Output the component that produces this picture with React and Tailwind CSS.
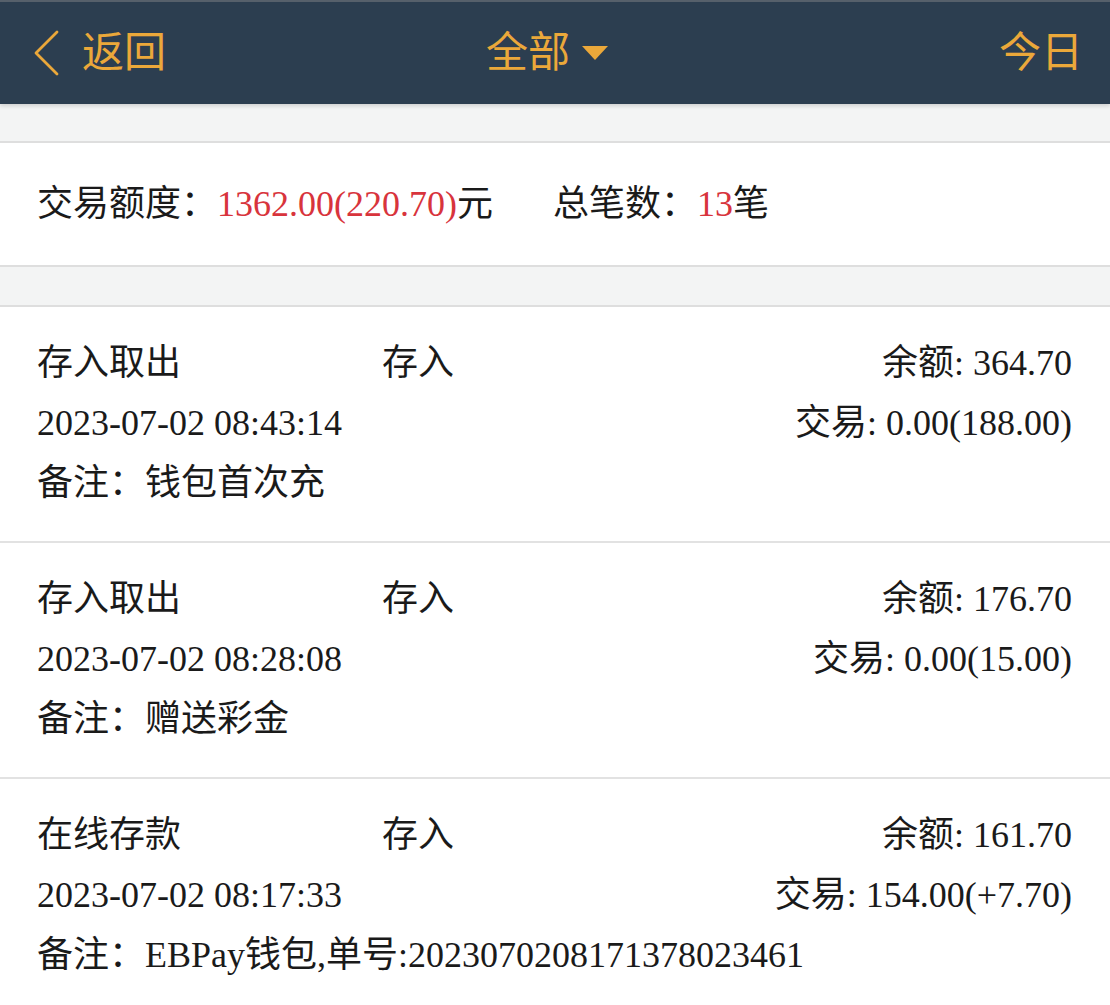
const records = [
  { kind: '存入取出', dir: '存入', balance: '364.70', time: '2023-07-02 08:43:14', amount: '0.00(188.00)', note: '钱包首次充' },
  { kind: '存入取出', dir: '存入', balance: '176.70', time: '2023-07-02 08:28:08', amount: '0.00(15.00)', note: '赠送彩金' },
  { kind: '在线存款', dir: '存入', balance: '161.70', time: '2023-07-02 08:17:33', amount: '154.00(+7.70)', note: 'EBPay钱包,单号:2023070208171378023461' },
];

function Header() {
  return (
    <div className="relative h-[104px] bg-[#2c3e50] flex items-center justify-between pl-[30px] pr-[27px] text-[42px] text-[#eba83a] shadow-[0_2px_4px_rgba(0,0,0,0.15)] border-t-2 border-[#56606b]">
      <div className="flex items-center">
        <svg width="32" height="48" viewBox="0 0 32 48" fill="none" stroke="currentColor" strokeWidth="2.8" strokeLinecap="round" strokeLinejoin="round">
          <path d="M27 3 L6 24 L27 45" />
        </svg>
        <span className="ml-[20px] leading-none">返回</span>
      </div>
      <div className="absolute left-[486px] top-0 h-full flex items-center">
        <span className="leading-none">全部</span>
        <svg className="ml-[12px]" width="26" height="16" viewBox="0 0 26 16" fill="currentColor">
          <path d="M0 1 L26 1 L13 15 Z" />
        </svg>
      </div>
      <span className="leading-none">今日</span>
    </div>
  );
}

function Record({ r }) {
  return (
    <div className="pt-[26px] pb-[28px] pl-[37px] pr-[38px] border-b-2 border-[#e2e2e2] leading-[60px]">
      <div className="flex">
        <div className="w-[345px]">{r.kind}</div>
        <div>{r.dir}</div>
        <div className="flex-1 text-right">余额: {r.balance}</div>
      </div>
      <div className="flex">
        <div>{r.time}</div>
        <div className="flex-1 text-right">交易: {r.amount}</div>
      </div>
      <div className="whitespace-nowrap">备注：{r.note}</div>
    </div>
  );
}

export default function App() {
  return (
    <div
      className="w-[1110px] h-[1005px] overflow-hidden bg-white text-[36px] text-[#1a1a1a]"
      style={{ fontFamily: '"Liberation Serif", "Noto Sans CJK SC", serif' }}
    >
      <Header />
      <div className="h-[39px] bg-[#f3f4f4] border-b-2 border-[#dedede]" />
      <div className="h-[122px] flex items-center pl-[37px]">
        <span>交易额度：</span>
        <span className="text-[#d8343c]">1362.00(220.70)</span>
        <span>元</span>
        <span className="ml-[60px]">总笔数：</span>
        <span className="text-[#d8343c]">13</span>
        <span>笔</span>
      </div>
      <div className="h-[42px] bg-[#f3f4f4] border-y-2 border-[#dedede]" />
      {records.map((r, i) => <Record key={i} r={r} />)}
    </div>
  );
}
